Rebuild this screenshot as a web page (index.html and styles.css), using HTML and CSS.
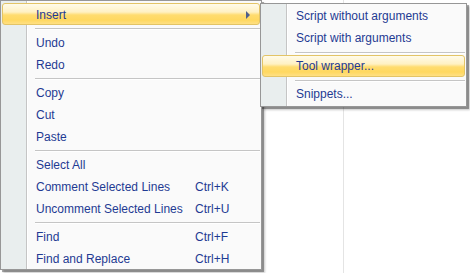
FILE: index.html
```html
<!DOCTYPE html>
<html lang="en">
<head>
  <meta charset="UTF-8">
  <title>Editor context menu</title>
  <link rel="stylesheet" href="styles.css">
</head>
<body>
  <div class="editor">
    <div class="menu main-menu">
      <div class="item active has-sub"><span class="label">Insert</span><span class="arrow"></span></div>
      <div class="sep"></div>
      <div class="item"><span class="label">Undo</span></div>
      <div class="item"><span class="label">Redo</span></div>
      <div class="sep"></div>
      <div class="item"><span class="label">Copy</span></div>
      <div class="item"><span class="label">Cut</span></div>
      <div class="item"><span class="label">Paste</span></div>
      <div class="sep"></div>
      <div class="item"><span class="label">Select All</span></div>
      <div class="item"><span class="label">Comment Selected Lines</span><span class="key">Ctrl+K</span></div>
      <div class="item"><span class="label">Uncomment Selected Lines</span><span class="key">Ctrl+U</span></div>
      <div class="sep"></div>
      <div class="item"><span class="label">Find</span><span class="key">Ctrl+F</span></div>
      <div class="item"><span class="label">Find and Replace</span><span class="key">Ctrl+H</span></div>
    </div>

    <div class="menu sub-menu">
      <div class="item"><span class="label">Script without arguments</span></div>
      <div class="item"><span class="label">Script with arguments</span></div>
      <div class="sep"></div>
      <div class="item active"><span class="label">Tool wrapper...</span></div>
      <div class="sep"></div>
      <div class="item"><span class="label">Snippets...</span></div>
    </div>
  </div>
</body>
</html>
```

FILE: styles.css
```css
* {
  margin: 0;
  padding: 0;
  box-sizing: border-box;
}

body {
  background: #fff;
  font-family: 'Liberation Sans', Arial, sans-serif;
  font-size: 12px;
}

.editor {
  position: relative;
  width: 470px;
  height: 273px;
  background: linear-gradient(to right, transparent 343px, #e4e4e4 343px, #e4e4e4 344px, transparent 344px);
}

.menu {
  position: absolute;
  border: 1px solid #979797;
  background: linear-gradient(to right, #e9eeee 0, #e9eeee 25px, #c5c5c5 25px, #c5c5c5 26px, #fff 26px, #fff 27px, #fafafa 27px);
  box-shadow: 2px 2px 0 rgba(0, 0, 0, 0.3), 3px 3px 2px rgba(0, 0, 0, 0.22);
}

.main-menu {
  left: 0;
  top: 0;
  width: 262px;
  padding: 2px 1px 0;
}

.sub-menu {
  left: 260px;
  top: 3px;
  width: 207px;
  padding: 1px;
}

.item {
  display: flex;
  align-items: center;
  height: 22px;
  padding: 1px 0 0 33px;
  color: #1f3a93;
  border: 1px solid transparent;
  border-radius: 3px;
}

.sub-menu .item {
  padding-top: 0;
}

.main-menu .label {
  width: 159px;
}

.key {
  white-space: nowrap;
}

.item.active {
  border-color: #e3c466;
  background: linear-gradient(#fffbea 0%, #fff1c3 40%, #ffdc6f 55%, #ffd860 80%, #ffe084 100%);
}

.has-sub .label {
  flex: 1;
}

.arrow {
  width: 0;
  height: 0;
  margin-right: 9px;
  border-top: 4px solid transparent;
  border-bottom: 4px solid transparent;
  border-left: 4px solid #4e5f8c;
}

.sep {
  height: 6px;
  margin-left: 33px;
  display: flex;
  flex-direction: column;
  justify-content: center;
}

.sep::before {
  content: '';
  display: block;
  height: 1px;
  background: #c5c5c5;
  box-shadow: 0 1px 0 #fff;
}
```
